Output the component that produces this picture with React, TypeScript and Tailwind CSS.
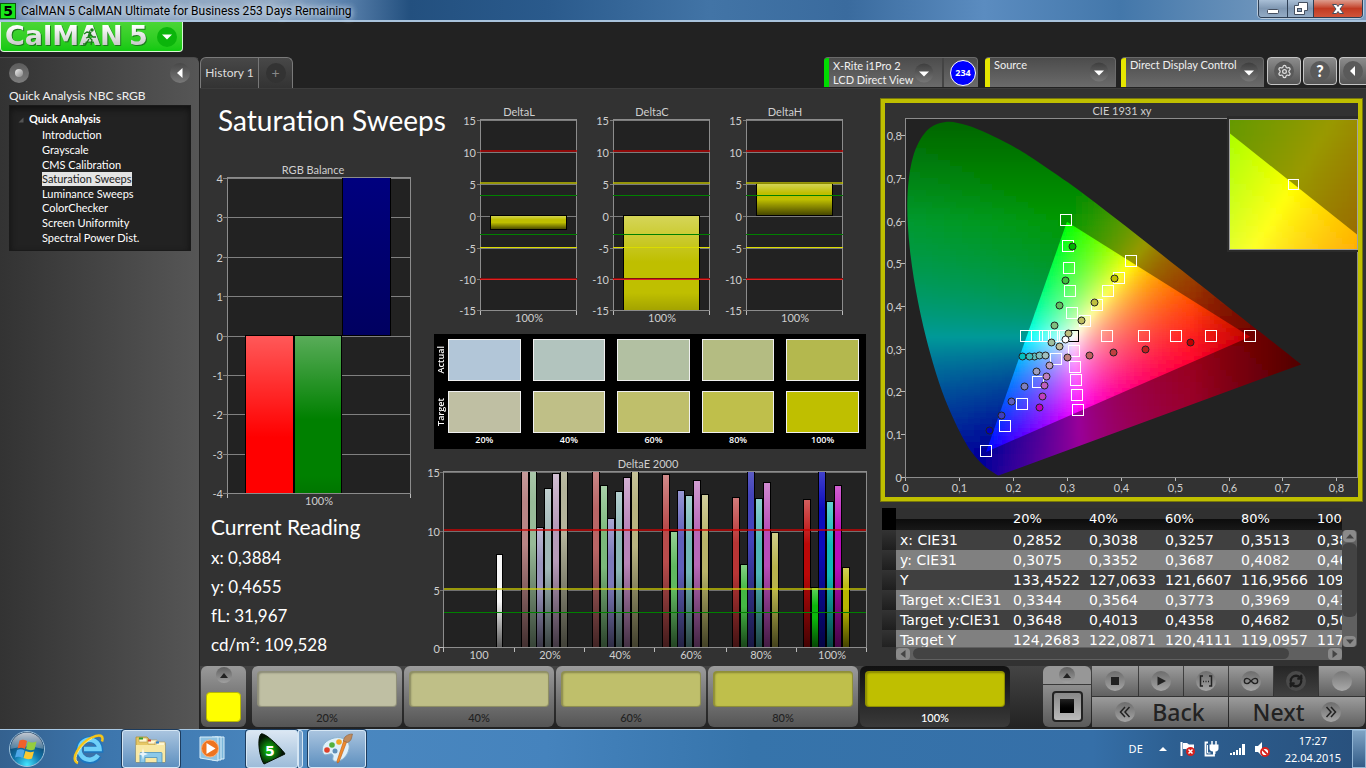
import React, { useState } from 'react';
import { Settings, Infinity as InfinityIcon, RefreshCw } from 'lucide-react';

const PAGES = [
  'Introduction',
  'Grayscale',
  'CMS Calibration',
  'Saturation Sweeps',
  'Luminance Sweeps',
  'ColorChecker',
  'Screen Uniformity',
  'Spectral Power Dist.',
];

const LEVELS = ['20%', '40%', '60%', '80%', '100%'];
const ACTUAL = ['#b2c6d8', '#b2c4be', '#b2c0a2', '#b4bc82', '#b4b84e'];
const TARGET = ['#bfbfa3', '#bfbf87', '#bfbf6b', '#bfbf4b', '#bfbf00'];

const READINGS = [
  ['x: CIE31', '0,2852', '0,3038', '0,3257', '0,3513', '0,3884'],
  ['y: CIE31', '0,3075', '0,3352', '0,3687', '0,4082', '0,4655'],
  ['Y', '133,4522', '127,0633', '121,6607', '116,9566', '109,5280'],
  ['Target x:CIE31', '0,3344', '0,3564', '0,3773', '0,3969', '0,4193'],
  ['Target y:CIE31', '0,3648', '0,4013', '0,4358', '0,4682', '0,5053'],
  ['Target Y', '124,2683', '122,0871', '120,4111', '119,0957', '117,8412'],
];

/* ---------- charts ---------- */

function Label({ x, y, anchor = 'middle', children }: { x: number; y: number; anchor?: 'start' | 'middle' | 'end'; children: React.ReactNode }) {
  return (
    <text x={x} y={y} textAnchor={anchor} className="fill-[#cfcfcf] text-[11px]">
      {children}
    </text>
  );
}

function Shade() {
  return (
    <defs>
      <linearGradient id="shade" x1="0" y1="0" x2="0" y2="1">
        <stop offset="0" stopColor="#fff" stopOpacity="0.35" />
        <stop offset="0.3" stopColor="#fff" stopOpacity="0" />
        <stop offset="0.5" stopColor="#000" stopOpacity="0" />
        <stop offset="1" stopColor="#000" stopOpacity="0.65" />
      </linearGradient>
    </defs>
  );
}

function Bar({ x, y, w, h, color }: { x: number; y: number; w: number; h: number; color: string }) {
  return (
    <g>
      <rect x={x} y={y} width={w} height={h} fill={color} />
      <rect x={x} y={y} width={w} height={h} fill="url(#shade)" stroke="#000" />
    </g>
  );
}

function Frame({ x, y, w, h }: { x: number; y: number; w: number; h: number }) {
  return <rect x={x} y={y} width={w} height={h} fill="none" stroke="#8c8c8c" />;
}

function RgbBalance() {
  const rows = [4, 3, 2, 1, 0, -1, -2, -3, -4];
  return (
    <svg viewBox="200 160 233 350" className="block w-full overflow-visible" role="img" aria-label="RGB Balance">
      <Shade />
      <linearGradient id="blueFade" x1="0" y1="0" x2="0" y2="1">
        <stop offset="0" stopColor="#000080" /><stop offset="1" stopColor="#000060" />
      </linearGradient>
      <clipPath id="rgbClip"><rect x="228" y="178" width="182" height="315" /></clipPath>
      <Label x={313} y={174}>RGB Balance</Label>
      <rect x="227" y="177" width="184" height="317" fill="#222" />
      {rows.map((v, i) => {
        const y = 178.5 + Math.round(i * 39.4);
        return (
          <g key={v}>
            <path d={`M223 ${y}H410`} stroke="#808080" />
            <Label x={223} y={y + 4} anchor="end">{v}</Label>
          </g>
        );
      })}
      <g clipPath="url(#rgbClip)">
        <Bar x={245.5} y={335.5} w={48} h={340} color="#ff0000" />
        <Bar x={294.5} y={335.5} w={47} h={280} color="#008000" />
        <rect x="342.5" y="170.5" width="48" height="165" fill="url(#blueFade)" stroke="#000" />
      </g>
      <Frame x={227.5} y={177.5} w={183} h={316} />
      <path d="M227.5 494v4M410.5 494v4" stroke="#bbb" />
      <Label x={319} y={505}>100%</Label>
    </svg>
  );
}

function DeltaPlot({ x, name, top, bottom }: { x: number; name: string; top: number; bottom: number }) {
  const grid: [number, number][] = [[15, 120.5], [10, 152.5], [5, 184.5], [0, 216.5], [-5, 248.5], [-10, 279.5], [-15, 310.5]];
  return (
    <g>
      <clipPath id={'clip' + name}><rect x={x} y="120" width="96" height="190" /></clipPath>
      <Label x={x + 39} y={116}>{name}</Label>
      <rect x={x} y="119" width="97" height="192" fill="#222" />
      {grid.map(([v, y]) => (
        <g key={v}>
          <path d={`M${x - 3} ${y}h99`} stroke="#7c7c7c" />
          <Label x={x - 4} y={y + 4} anchor="end">{v}</Label>
        </g>
      ))}
      <Frame x={x + 0.5} y={119.5} w={96} h={191} />
      <g clipPath={`url(#clip${name})`}>
        <Bar x={x + 10.5} y={top} w={76} h={bottom - top} color="#bfbf00" />
      </g>
      <rect x={x} y="150" width="97" height="2" fill="#c00000" opacity="0.7" />
      <rect x={x} y="182" width="97" height="2" fill="#c8c800" opacity="0.7" />
      <rect x={x} y="195" width="97" height="1" fill="#008000" />
      <rect x={x} y="234" width="97" height="1" fill="#008000" />
      <rect x={x} y="247" width="97" height="1" fill="#dcdc00" />
      <rect x={x} y="278" width="97" height="1" fill="#801010" />
      <rect x={x} y="279" width="97" height="1" fill="#e02020" />
      <path d={`M${x + 0.5} 311v4M${x + 96.5} 311v4`} stroke="#bbb" />
      <Label x={x + 49} y={322}>100%</Label>
    </g>
  );
}

function DeltaCharts() {
  return (
    <svg viewBox="433 100 447 230" className="block w-full overflow-visible" role="img" aria-label="DeltaL, DeltaC and DeltaH">
      <Shade />
      <DeltaPlot x={480} name="DeltaL" top={215.5} bottom={229.5} />
      <DeltaPlot x={613} name="DeltaC" top={215.5} bottom={370} />
      <DeltaPlot x={746} name="DeltaH" top={183.5} bottom={215.5} />
    </svg>
  );
}

// top edge of each bar: red, green, blue, cyan, magenta, yellow
const DELTA_E = [
  { x: 521, tops: [440, 440, 528, 489, 474, 420], colors: ['#b98585', '#98bb98', '#9a95bd', '#a0b7b7', '#b79bb9', '#b4b49b'] },
  { x: 592, tops: [450, 486, 519, 492, 478, 445], colors: ['#b86565', '#7ab87a', '#7d7aba', '#8cb6b6', '#b985b9', '#b8b480'] },
  { x: 662, tops: [475, 532, 491, 496, 481, 495], colors: ['#b84c4c', '#5fb85f', '#605fba', '#73b6b6', '#b868b8', '#b8b468'] },
  { x: 732, tops: [498, 565, 430, 499, 483, 533], colors: ['#b83535', '#44b844', '#4444ba', '#50b6b6', '#b84cb8', '#b8b44c'] },
  { x: 803, tops: [500, 588, 450, 502, 486, 568], colors: ['#bb0808', '#0cb80c', '#0c0cbc', '#10b8b8', '#b80cb8', '#b8b400'] },
];

function DeltaE() {
  return (
    <svg viewBox="433 455 447 208" className="block w-full overflow-visible" role="img" aria-label="DeltaE 2000">
      <Shade />
      <clipPath id="deClip"><rect x="444" y="472" width="422" height="175" /></clipPath>
      <Label x={648} y={468}>DeltaE 2000</Label>
      <rect x="443" y="471" width="424" height="177" fill="#222" />
      {[[15, 472.5], [10, 531.5], [5, 590.5], [0, 648.5]].map(([v, y]) => (
        <g key={v}>
          {v > 0 && <path d={`M440 ${y}H866`} stroke="#707070" />}
          <Label x={440} y={y + 4} anchor="end">{v}</Label>
        </g>
      ))}
      <g clipPath="url(#deClip)">
        <Bar x={496.5} y={554.5} w={6} h={94} color="#f6f6f6" />
        {DELTA_E.map(g =>
          g.tops.map((top, i) => (
            <Bar key={g.x + i} x={g.x + 0.5 + Math.round(i * 7.7)} y={top - 0.5} w={7} h={649 - top} color={g.colors[i]} />
          ))
        )}
      </g>
      <Frame x={443.5} y={471.5} w={423} h={176} />
      <path d="M444 530h422" stroke="#d00000" strokeWidth="2" opacity="0.7" />
      <path d="M444 589h422" stroke="#d8d800" strokeWidth="2" opacity="0.65" />
      <path d="M444 612.5h422" stroke="#008000" />
      <path d="M439 647.5h5M443.5 648v4M514.5 648v4M584.5 648v4M654.5 648v4M726.5 648v4M796.5 648v4M866.5 648v4" stroke="#bbb" />
      {['100', ...LEVELS].map((t, i) => (
        <Label key={t + i} x={479 + Math.round(i * 70.5)} y={659}>{t}</Label>
      ))}
    </svg>
  );
}

/* ---------- CIE diagram ---------- */

const LOCUS = [
  [0.1741, 0.005], [0.1714, 0.0051], [0.1644, 0.0109], [0.1566, 0.0177], [0.144, 0.0297], [0.1241, 0.0578],
  [0.1096, 0.0868], [0.0913, 0.1327], [0.0687, 0.2007], [0.0454, 0.295], [0.0235, 0.4127], [0.0082, 0.5384],
  [0.0039, 0.6548], [0.0139, 0.7502], [0.0389, 0.812], [0.0743, 0.8338], [0.1142, 0.8262], [0.1547, 0.8059],
  [0.1929, 0.7816], [0.2296, 0.7543], [0.3016, 0.6923], [0.3731, 0.6245], [0.4441, 0.5547], [0.5125, 0.4866],
  [0.5752, 0.4242], [0.627, 0.3725], [0.6658, 0.334], [0.6915, 0.3083], [0.719, 0.2809], [0.7347, 0.2653],
];

const toX = (x: number) => 905.3 + x * 538.8;
const toY = (y: number) => 477.5 - y * 426.3;

function smoothPath(points: number[][]) {
  const p = points.map(([x, y]) => [toX(x), toY(y)]);
  let d = `M${p[0][0]} ${p[0][1]}`;
  for (let i = 0; i < p.length - 1; i++) {
    const a = p[Math.max(i - 1, 0)];
    const b = p[i];
    const c = p[i + 1];
    const e = p[Math.min(i + 2, p.length - 1)];
    d += `C${b[0] + (c[0] - a[0]) / 6} ${b[1] + (c[1] - a[1]) / 6} ${c[0] - (e[0] - b[0]) / 6} ${c[1] - (e[1] - b[1]) / 6} ${c[0]} ${c[1]}`;
  }
  return d + 'Z';
}

// chromaticity -> display colour at full drive, scaled by level
function xyColor(x: number, y: number, level: number) {
  const z = 1 - x - y;
  const rgb = [
    3.2406 * x - 1.5372 * y - 0.4986 * z,
    -0.9689 * x + 1.8758 * y + 0.0415 * z,
    0.0557 * x - 0.204 * y + 1.057 * z,
  ];
  const max = Math.max(...rgb);
  const fade = (1 - 2.3 * Math.max(0, x - 0.53)) * (1 - 1.4 * Math.max(0, y - 0.6));
  const out = rgb.map(c => Math.round(255 * level * fade * Math.pow(Math.max(0, c) / max, 1 / 1.15)));
  return `rgb(${out.join(',')})`;
}

type MeshProps = {
  x: number; y: number; w: number; h: number; step: number; level: number;
  invert: (px: number, py: number) => [number, number];
};

function Mesh({ x, y, w, h, step, level, invert }: MeshProps) {
  const cells = [];
  for (let py = y; py < y + h; py += step) {
    for (let px = x; px < x + w; px += step) {
      const [cx, cy] = invert(px + step / 2, py + step / 2);
      cells.push(<rect key={px + '-' + py} x={px} y={py} width={step} height={step} fill={xyColor(cx, cy, level)} />);
    }
  }
  return <g shapeRendering="crispEdges" filter="url(#soft)">{cells}</g>;
}

const mainInvert = (px: number, py: number): [number, number] => [(px - 905.3) / 538.8, (477.5 - py) / 426.3];
const insetInvert = (px: number, py: number): [number, number] => [0.4193 + (px - 1293.5) / 2000, 0.5053 - (py - 184.5) / 2000];

const TARGETS = [
  [1066, 220], [1068, 246], [1069, 268], [1070, 291], [1072, 313],
  [1131, 261], [1119, 278], [1108, 291], [1097, 305], [1085, 321],
  [1026, 336], [1037, 336], [1045, 336], [1054, 336], [1063, 336],
  [1107, 336], [1144, 336], [1176, 336], [1211, 336], [1250, 336],
  [1074, 351], [1075, 367], [1076, 380], [1077, 395], [1078, 410],
  [1056, 359], [1038, 382], [1022, 404], [1005, 426], [986, 451],
];

const MEASURED: [number, number, string][] = [
  [1072, 246, '#00b400'], [1065, 280, '#3fbf3f'], [1059, 305, '#60bf60'], [1054, 325, '#7fbf7f'], [1051, 342, '#9fbf9f'],
  [1114, 278, '#bfbf00'], [1094, 302, '#bfbf3f'], [1081, 320, '#bfbf60'], [1068, 333, '#bfbf7f'], [1059, 346, '#bfbf9f'],
  [1022, 356, '#00bfbf'], [1034, 356, '#60bfbf'], [1029, 356, '#3fbfbf'], [1039, 355, '#7fbfbf'], [1045, 355, '#9fbfbf'],
  [1067, 357, '#bf8080'], [1089, 355, '#bf6060'], [1113, 352, '#bf4040'], [1145, 349, '#bf2020'], [1190, 342, '#bf0000'],
  [1049, 365, '#bf9fbf'], [1046, 376, '#bf7fbf'], [1044, 385, '#bf60bf'], [1042, 396, '#bf3fbf'], [1039, 407, '#bf00bf'],
  [1036, 371, '#9f9fbf'], [1024, 386, '#7f7fbf'], [1011, 401, '#6060bf'], [1001, 415, '#3f3fbf'], [989, 430, '#0000bf'],
  [1065, 339, '#ffffff'],
];

function CieChart() {
  return (
    <svg viewBox="885 103 473 394" className="block w-full overflow-visible" role="img" aria-label="CIE 1931 xy">
      <defs>
        <filter id="soft" x="0" y="0" width="1" height="1"><feGaussianBlur stdDeviation="2" /></filter>
        <clipPath id="locus"><path d={smoothPath(LOCUS)} /></clipPath>
        <clipPath id="gamut"><path d={`M${toX(0.64)} ${toY(0.33)}L${toX(0.3)} ${toY(0.6)}L${toX(0.15)} ${toY(0.06)}Z`} /></clipPath>
        <clipPath id="insetBox"><rect x="1230" y="120" width="127" height="129" /></clipPath>
        <clipPath id="insetGamut"><path d="M1230 133.500L1357 234.500V249H1230Z" /></clipPath>
      </defs>
      <Label x={1122} y={115}>CIE 1931 xy</Label>
      <rect x="905" y="118" width="453" height="360" fill="#222" stroke="none" />
      <g clipPath="url(#locus)"><Mesh x={896} y={112} w={414} h={372} step={6} level={0.6} invert={mainInvert} /></g>
      <g clipPath="url(#gamut)"><Mesh x={978} y={212} w={280} h={248} step={4} level={1} invert={mainInvert} /></g>
      <rect x="905.5" y="118.5" width="452" height="359" fill="none" stroke="#8c8c8c" />
      {[0, 1, 2, 3, 4, 5, 6, 7, 8].map(n => {
        const text = n === 0 ? '0' : `0,${n}`;
        const px = Math.round(905.3 + n * 53.88) + 0.5;
        const py = Math.round(477.5 - n * 42.63) - 0.5;
        return (
          <g key={n}>
            <path d={`M${px} 478v3M901 ${py}h4`} stroke="#bbb" />
            <Label x={px} y={492}>{text}</Label>
            <Label x={902} y={py + 4} anchor="end">{text}</Label>
          </g>
        );
      })}
      {TARGETS.map(([x, y]) => (
        <rect key={x + '/' + y} x={x - 5.5} y={y - 5.5} width="11" height="11" fill="none" stroke="#fff" />
      ))}
      <rect x="1068.5" y="330.5" width="10" height="11" fill="none" stroke="#000" />
      {MEASURED.map(([x, y, c]) => (
        <circle key={x + '/' + y} cx={x + 0.5} cy={y + 0.5} r="3.5" fill={c} stroke="#222" />
      ))}
      <rect x="1227" y="116" width="131" height="136" fill="#2b2b2b" />
      <g clipPath="url(#insetBox)"><Mesh x={1222} y={112} w={144} h={144} step={6} level={0.6} invert={insetInvert} /></g>
      <g clipPath="url(#insetGamut)"><Mesh x={1222} y={112} w={144} h={144} step={6} level={1} invert={insetInvert} /></g>
      <rect x="1229.5" y="119.5" width="128" height="130" fill="none" stroke="#a0a0a0" />
      <rect x="1288.5" y="179.500" width="10" height="10" fill="none" stroke="#fff" />
    </svg>
  );
}

/* ---------- small pieces ---------- */

function Down({ className = '' }: { className?: string }) {
  return (
    <svg viewBox="0 0 20 20" className={'size-5 shrink-0 ' + className} aria-hidden="true">
      <defs>
        <linearGradient id="disc" x1="0" y1="0" x2="0" y2="1">
          <stop offset="0" stopColor="#3e3e3e" /><stop offset="1" stopColor="#767676" />
        </linearGradient>
      </defs>
      <circle cx="10" cy="10" r="9.500" fill="url(#disc)" />
      <path d="M5 8.500h10L10 13.500Z" fill="#fff" />
    </svg>
  );
}

function TitleBar() {
  return (
    <header className="flex h-[22px] items-start justify-between border-b-2 border-[#a9c3dd] bg-[linear-gradient(90deg,#5d7fa8_0%,#8aa3c0_3%,#93aac4_20%,#5c83ae_25%,#23507f_30%,#2a5a8c_40%,#4274a6_52%,#3a6b9e_62%,#5b8cc0_72%,#4377aa_82%,#6b93bb_92%,#7b9dc0_100%)]">
      <div className="flex h-[21px] items-center gap-[5px] font-[Roboto] text-[12px] text-black">
        <span className="flex size-4 items-center justify-center border border-[#0a5a0a] bg-[#19e619] font-['DejaVu_Sans'] text-sm font-bold">5</span>
        <h1 className="whitespace-nowrap [text-shadow:0_0_6px_#dfe8f2,0_0_6px_#dfe8f2]">CalMAN 5 CalMAN Ultimate for Business 253 Days Remaining</h1>
      </div>
      <div className="mr-[3px] flex h-[18px] overflow-hidden rounded-b border border-t-0 border-[#2d3f55] shadow-[0_0_0_1px_#b9cadb]">
        <button aria-label="Minimize" className="flex w-[29px] items-center justify-center border-r border-[#2d3f55] bg-linear-to-b from-[#a9bfd6] via-[#7f97b2] to-[#93abc5]">
          <svg viewBox="0 0 14 12" className="h-3 w-3.5"><rect x="1.500" y="6.500" width="11" height="4" rx="1" fill="#fff" stroke="#444f60" /></svg>
        </button>
        <button aria-label="Restore" className="flex w-[26px] items-center justify-center border-r border-[#2d3f55] bg-linear-to-b from-[#a9bfd6] via-[#7f97b2] to-[#93abc5]">
          <svg viewBox="0 0 14 13" className="h-[13px] w-3.5">
            <path d="M4.500 .5h9v8h-3v4h-10v-9h4Z" fill="#fff" stroke="#444f60" />
            <rect x="3.500" y="6.500" width="4" height="3" fill="#8fa5bd" stroke="#444f60" />
          </svg>
        </button>
        <button aria-label="Close" className="flex w-12 items-center justify-center bg-linear-to-b from-[#dd9c8d] via-[#c13a22] to-[#d0543a]">
          <svg viewBox="0 0 14 12" className="h-3 w-3.5"><path d="M1.500 1.500h4l1.500 2 1.500-2h4l-3.500 4.500 3.500 4.500h-4L7 8.500l-1.500 2h-4L5 6Z" fill="#fff" stroke="#444f60" /></svg>
        </button>
      </div>
    </header>
  );
}

function Sidebar() {
  const [page, setPage] = useState('Saturation Sweeps');
  return (
    <aside className="flex w-[200px] shrink-0 flex-col rounded-tr-md border-t border-r border-t-[#4c4c4c] border-r-[#222] bg-linear-to-r from-[#333] to-[#565656] px-[9px]">
      <div className="flex h-[30px] items-center justify-between">
        <button aria-label="Options" className="size-5 rounded-full bg-linear-to-b from-[#5c5c5c] to-[#7d7d7d] p-1.5">
          <span className="block size-2 rounded-full bg-linear-to-br from-[#eee] to-[#888]" />
        </button>
        <button aria-label="Collapse sidebar" className="flex size-5 items-center justify-center rounded-full bg-linear-to-b from-[#484848] to-[#787878]">
          <svg viewBox="0 0 10 12" className="h-3 w-2.5"><path d="M7.500 1v10L2 6Z" fill="#fff" /></svg>
        </button>
      </div>
      <h2 className="h-[17px] text-[12px] leading-4 whitespace-nowrap text-[#f0f0f0]">Quick Analysis NBC sRGB</h2>
      <nav className="-mr-px h-[146px] border border-[#1a1a1a] bg-[#222] pt-[5px] pl-2 shadow-[inset_0_3px_6px_#111]">
        <div className="flex h-[17px] items-center gap-[5px] text-[11px] font-bold text-white">
          <svg viewBox="0 0 6 6" className="size-1.5"><path d="M5.500 .5v5h-5Z" fill="#555" /></svg>
          Quick Analysis
        </div>
        <ul className="grid h-[117px] grid-rows-8 pl-6 text-[11px] text-white">
          {PAGES.map(p => (
            <li key={p} className="flex items-center">
              <a
                href="#"
                onClick={() => setPage(p)}
                className={p === page ? 'bg-[#e4e4e4] leading-[14px] text-[#222]' : 'leading-[14px]'}
              >
                {p}
              </a>
            </li>
          ))}
        </ul>
      </nav>
    </aside>
  );
}

function Toolbar() {
  return (
    <div className="flex h-[31px] items-start justify-between bg-[#222]">
      <div className="flex h-full overflow-hidden rounded-t-md border border-b-0 border-[#7a7a7a] bg-linear-to-b from-[#484848] to-[#333] text-xs text-[#ddd]">
        <button className="w-[58px] border-r border-[#777] text-center whitespace-nowrap">History 1</button>
        <button aria-label="Add history" className="flex w-[33px] items-center justify-center">
          <span className="flex size-5 items-center justify-center rounded-full bg-[#333] text-sm leading-none text-[#888]">+</span>
        </button>
      </div>
      <div className="flex h-full text-[11px] leading-[14px] text-[#f0f0f0]">
        <div className="mr-[7px] flex h-[30px] w-[154px] overflow-hidden rounded-t border border-b-0 border-l-0 border-[#6a6a6a] bg-linear-to-b from-[#4c4c4c] to-[#6b6b6b]">
          <span className="w-[5px] bg-[#00dc00]" />
          <button aria-haspopup="menu" className="flex flex-1 items-center justify-between border-r-2 border-[#444] pr-2 pl-1 text-left whitespace-nowrap">
            <span>X-Rite i1Pro 2<br />LCD Direct View</span>
            <Down />
          </button>
          <div className="flex w-[33px] items-center justify-end pr-px">
            <span className="flex size-[26px] items-center justify-center rounded-full border border-white bg-[#0000ff] font-['Open_Sans'] text-[9px] font-bold text-white">234</span>
          </div>
        </div>
        <button aria-haspopup="menu" className="mr-[5px] flex h-[30px] w-[131px] overflow-hidden rounded-t border border-b-0 border-l-0 border-[#6a6a6a] bg-linear-to-b from-[#4c4c4c] to-[#6b6b6b] pr-1.5 text-left">
          <span className="mr-1 h-full w-[5px] bg-[#e6e600]" />
          <span className="flex-1">Source</span>
          <Down className="mt-1" />
        </button>
        <button aria-haspopup="menu" className="mr-[3px] flex h-[30px] w-[143px] overflow-hidden rounded-t border border-b-0 border-l-0 border-[#6a6a6a] bg-linear-to-b from-[#4c4c4c] to-[#6b6b6b] pr-1 text-left whitespace-nowrap">
          <span className="mr-1 h-full w-[5px] bg-[#e6e600]" />
          <span className="flex-1">Direct Display Control</span>
          <Down className="mt-1" />
        </button>
        <button aria-label="Settings" className="mr-0.5 flex h-7 w-[34px] items-center justify-center rounded border border-[#c4c4c4] bg-linear-to-b from-[#8c8c8c] to-[#555]">
          <span className="flex size-5 items-center justify-center rounded-full bg-[#5a5a5a]"><Settings size={15} color="#ddd" /></span>
        </button>
        <button aria-label="Help" className="mr-0.5 flex h-7 w-[34px] items-center justify-center rounded border border-[#c4c4c4] bg-linear-to-b from-[#8c8c8c] to-[#555]">
          <span className="flex size-5 items-center justify-center rounded-full bg-[#5a5a5a] text-base font-black text-white">?</span>
        </button>
        <button aria-label="Collapse toolbar" className="flex h-7 w-[27px] items-center justify-center rounded-l border border-r-0 border-[#c4c4c4] bg-linear-to-b from-[#8c8c8c] to-[#555]">
          <span className="flex size-5 items-center justify-center rounded-full bg-[#5a5a5a]">
            <svg viewBox="0 0 10 12" className="h-3 w-2.5"><path d="M7 1v10L2 6Z" fill="#fff" /></svg>
          </span>
        </button>
      </div>
    </div>
  );
}

function Swatches() {
  const rows = [{ name: 'Actual', colors: ACTUAL }, { name: 'Target', colors: TARGET }];
  return (
    <section className="mt-1 mr-3.5 ml-px flex h-[115px] flex-col bg-black pt-[5px] font-['Open_Sans'] text-[9px] font-semibold text-white">
      {rows.map(r => (
        <div key={r.name} className="mb-2.5 flex h-[42px] pr-[7px]">
          <div className="flex w-3.5 shrink-0 items-center justify-center">
            <span className="rotate-180 leading-3 [writing-mode:vertical-rl]">{r.name}</span>
          </div>
          <div className="grid flex-1 grid-cols-5 gap-x-3">
            {r.colors.map(c => (
              <div key={c} className="border border-[#f0f0f0]" style={{ background: c }} />
            ))}
          </div>
        </div>
      ))}
      <div className="-mt-2.5 grid grid-cols-5 gap-x-3 pr-[7px] pl-3.5 text-center leading-[14px]">
        {LEVELS.map(l => <span key={l}>{l}</span>)}
      </div>
    </section>
  );
}

function ReadingsTable() {
  return (
    <section className="mt-1.5 mr-[9px] ml-0.5 grid grid-cols-[minmax(0,1fr)_15px] grid-rows-[139px_13px] font-['DejaVu_Sans'] text-sm text-white">
      <div className="overflow-hidden">
        <table className="w-[507px] table-fixed border-collapse text-left leading-5">
          <thead>
            <tr className="h-[22px] bg-[linear-gradient(#303030_50%,#0c0c0c_50%,#181818)]">
              <th className="w-3.5 bg-black p-0" />
              <th className="w-[113px] p-0" />
              {LEVELS.map(l => <th key={l} className="w-19 p-0 pl-1 text-[13px] font-normal">{l}</th>)}
            </tr>
          </thead>
          <tbody>
            {READINGS.map(([name, ...values]) => (
              <tr key={name} className="h-5 bg-[#404040] even:bg-[#808080]">
                <td className="bg-linear-to-b from-[#333] to-[#1e1e1e] p-0" />
                <th className="p-0 pl-1 font-normal whitespace-nowrap">{name}</th>
                {values.map((v, i) => <td key={i} className="p-0 pl-1">{v}</td>)}
              </tr>
            ))}
          </tbody>
        </table>
      </div>
      <div className="mt-[22px] flex flex-col items-center justify-between rounded bg-[#606060]">
        <button aria-label="Scroll up" className="flex h-3 w-[13px] items-center justify-center rounded bg-[#8a8a8a]">
          <svg viewBox="0 0 8 6" className="h-1.5 w-2"><path d="M0 5.500h8L4 1Z" fill="#444" /></svg>
        </button>
        <span className="mb-[19px] h-[74px] w-[15px] rounded-md bg-[#434343]" />
        <button aria-label="Scroll down" className="flex h-[11px] w-[13px] items-center justify-center rounded bg-[#8a8a8a]">
          <svg viewBox="0 0 8 6" className="h-1.5 w-2"><path d="M0 .5h8L4 5Z" fill="#444" /></svg>
        </button>
      </div>
      <div className="ml-3.5 flex items-center bg-[#606060]">
        <button aria-label="Scroll left" className="flex h-3 w-3.5 items-center justify-center rounded bg-[#8a8a8a]">
          <svg viewBox="0 0 6 8" className="h-2 w-1.5"><path d="M5.500 0v8L.5 4Z" fill="#444" /></svg>
        </button>
        <span className="mr-[39px] ml-[3px] h-[11px] flex-1 rounded-md bg-[#434343]" />
        <button aria-label="Scroll right" className="flex h-3 w-3.5 items-center justify-center rounded bg-[#8a8a8a]">
          <svg viewBox="0 0 6 8" className="h-2 w-1.5"><path d="M.5 0v8l5-4Z" fill="#444" /></svg>
        </button>
      </div>
    </section>
  );
}

function Disc({ children, className = 'bg-linear-to-b from-[#6d6d6d] to-[#a5a5a5]' }: { children?: React.ReactNode; className?: string }) {
  return <span className={'flex size-5 shrink-0 items-center justify-center rounded-full ' + className}>{children}</span>;
}

function UpDisc() {
  return (
    <span className="flex size-4 items-center justify-center rounded-full bg-linear-to-b from-[#606060] to-[#a0a0a0]">
      <svg viewBox="0 0 8 5" className="h-[5px] w-2"><path d="M0 5h8L4 0Z" fill="#222" /></svg>
    </span>
  );
}

function BottomBar() {
  const [level, setLevel] = useState('100%');
  const key = 'flex items-center justify-center bg-linear-to-b from-[#9c9c9c] to-[#616161]';
  return (
    <footer className="flex h-[63px] items-start gap-1.5 bg-linear-to-b from-[#444] to-[#222] pl-px">
      <button aria-label="Current patch" className="flex h-[61px] w-[45px] flex-col items-center rounded-md bg-linear-to-b from-[#9a9a9a] to-[#555] pt-px">
        <UpDisc />
        <span className="mt-[9px] h-[30px] w-[35px] rounded border border-[#b8b800] bg-[#ffff00]" />
      </button>
      <div className="grid min-w-0 flex-1 grid-cols-5 gap-0.5">
        {LEVELS.map((l, i) => (
          <button
            key={l}
            onClick={() => setLevel(l)}
            className={
              'flex h-[61px] flex-col items-stretch rounded-md px-[5px] pt-[5px] text-[11px] font-medium ' +
              (l === level ? 'bg-linear-to-b from-[#111] to-[#3a3a3a] font-bold text-white' : 'bg-linear-to-b from-[#9c9c9c] to-[#555] text-[#222]')
            }
          >
            <span className="h-9 rounded border border-black/25 shadow-[inset_1px_1px_2px_rgba(0,0,0,0.3)]" style={{ background: TARGET[i] }} />
            <span className="mt-1 leading-[14px]">{l}</span>
          </button>
        ))}
      </div>
      <div className="ml-[27px] flex gap-px pr-px">
        <div className="flex h-[61px] w-12 flex-col gap-px overflow-hidden rounded-md">
          <button aria-label="Expand" className="flex h-[18px] items-center justify-center bg-[#979797]"><UpDisc /></button>
          <button aria-label="Pattern window" className="flex flex-1 items-center justify-center bg-linear-to-b from-[#8e8e8e] to-[#5a5a5a]">
            <span className="flex size-[31px] items-center justify-center rounded border-2 border-[#222] bg-linear-to-b from-[#888] to-[#bbb]">
              <span className="size-3.5 bg-linear-to-b from-[#222] to-black" />
            </span>
          </button>
        </div>
        <div className="grid grid-cols-[46px_44px_44px_44px_44px_46px] grid-rows-[30px_30px] gap-px overflow-hidden rounded-r-md">
          <button aria-label="Stop" className={key}><Disc><span className="size-2 bg-[#222]" /></Disc></button>
          <button aria-label="Play" className={key}>
            <Disc><svg viewBox="0 0 10 10" className="size-2.5"><path d="M1.500 .5v9L10 5Z" fill="#222" /></svg></Disc>
          </button>
          <button aria-label="Read series" className={key}>
            <Disc>
              <svg viewBox="0 0 14 12" className="h-3 w-3.5" fill="none" stroke="#222" strokeWidth="1.500">
                <path d="M4 1H1.500v10H4M10 1h2.500v10H10" /><path d="M4 6.500h1M6.500 6.500h1M9 6.500h1" />
              </svg>
            </Disc>
          </button>
          <button aria-label="Continuous" className={key}><Disc><InfinityIcon size={16} color="#222" /></Disc></button>
          <button aria-label="Refresh" className="flex items-center justify-center bg-linear-to-b from-[#262626] to-[#404040]">
            <Disc className="bg-[#4a4a4a]"><RefreshCw size={14} strokeWidth={4} color="#1c1c1c" /></Disc>
          </button>
          <button aria-label="Record" className={key}><Disc className="bg-linear-to-b from-[#777] to-[#aaa]" /></button>
          <button className={key + " col-span-3 gap-[17px] font-['Noto_Sans'] text-[23px] leading-none font-medium text-[#222]"}>
            <Disc>
              <svg viewBox="0 0 12 12" className="size-3" fill="none" stroke="#222" strokeWidth="1.500"><path d="M6 1 1.500 6 6 11M10.500 1 6 6l4.500 5" /></svg>
            </Disc>
            Back
          </button>
          <button className={key + " col-span-3 gap-[17px] font-['Noto_Sans'] text-[23px] leading-none font-medium text-[#222]"}>
            Next
            <Disc>
              <svg viewBox="0 0 12 12" className="size-3" fill="none" stroke="#222" strokeWidth="1.500"><path d="m1.500 1 4.500 5-4.500 5M6 1l4.500 5L6 11" /></svg>
            </Disc>
          </button>
        </div>
      </div>
    </footer>
  );
}

/* ---------- taskbar ---------- */

function StartOrb() {
  return (
    <svg viewBox="0 0 38 38" className="size-[38px]">
      <defs>
        <radialGradient id="orb" cx="0.5" cy="0.95" r="0.85">
          <stop offset="0" stopColor="#45e6ff" /><stop offset="0.45" stopColor="#1278ad" /><stop offset="1" stopColor="#0d2f55" />
        </radialGradient>
        <linearGradient id="gloss" x1="0" y1="0" x2="0" y2="1">
          <stop offset="0" stopColor="#fff" stopOpacity="0.75" /><stop offset="1" stopColor="#fff" stopOpacity="0.25" />
        </linearGradient>
      </defs>
      <circle cx="19" cy="19" r="17.500" fill="url(#orb)" stroke="#9fc3dc" />
      <path d="M2.500 19A16.500 16.500 0 0 1 35.500 19Q19 14 2.500 19Z" fill="url(#gloss)" />
      <path d="M11.500 10.500q4-1.500 7.500.5l-2 8q-3.500-2-7.500-.5Z" fill="#f0602a" />
      <path d="M20 11.500q4 2 8.500 0l-2 8q-4.500 1.500-8.500-.5Z" fill="#94cc3e" />
      <path d="M9 20q4-1.500 7.500.500l-2 7.500q-3.500-2-7.500-.5Z" fill="#4fa8e8" />
      <path d="M17.500 21q4 2 8.500.5l-2 7q-4.500 1.500-8.500-.5Z" fill="#fbc932" />
    </svg>
  );
}

function IeIcon() {
  return (
    <svg viewBox="0 0 34 32" className="h-8 w-[34px]" fill="none">
      <path d="M26.500 22.500a10.500 10.500 0 1 1 1.500-6H12" stroke="#1b76c0" strokeWidth="6.500" />
      <path d="M26 22a10 10 0 1 1 1.500-6H12" stroke="#6fd0f8" strokeWidth="4.500" />
      <path d="M6 30C-3 27 8 10 20 4.500c8-4 12-2 10 4" stroke="#f5c518" strokeWidth="2.500" />
      <path d="M6 29C0 26 9 11 20 5.500" stroke="#fff0a0" strokeWidth="0.8" />
    </svg>
  );
}

function FolderIcon() {
  return (
    <svg viewBox="0 0 34 32" className="h-8 w-[34px]">
      <path d="M2 29V4h11l2 2v4h16v19Z" fill="#e6c866" stroke="#b08f35" strokeWidth="0.8" />
      <path d="M5 5h8v4H5ZM14 7h9v4h-9ZM21 9h10v4H21Z" fill="#fff6d0" stroke="#b99c4a" strokeWidth="0.6" />
      <path d="M5 4.500h4v2H5Z" fill="#30a030" /><path d="M14 6.500h3v2h-3Z" fill="#d04030" /><path d="M22 8.500h3v2h-3Z" fill="#3080d0" />
      <path d="M2 12h29v17H2Z" fill="#f8e8a4" />
      <path d="M6 29.500v-9q0-1 1-1h20q1 0 1 1v9h-5v-5H11v5Z" fill="#8cc9e8" stroke="#4d93bd" strokeWidth="0.8" />
      <path d="m9 15 1 4.500 4 1.500-4 1.500L9 27l-1-4.500L4 21l4-1.500Z" fill="#fff" opacity="0.8" />
    </svg>
  );
}

function PlayerIcon() {
  return (
    <svg viewBox="0 0 30 28" className="h-7 w-[30px]">
      <path d="M16 2h9v22h-9Z" fill="#7cb7da" stroke="#d8eefa" />
      <path d="M13 2h9v23h-9Z" fill="#7cb7da" stroke="#d8eefa" />
      <path d="M1 2h18v24L1 23Z" fill="#8fc3e2" stroke="#d8eefa" />
      <circle cx="11" cy="13.500" r="8.500" fill="#ee7420" stroke="#fbb27a" />
      <path d="M7.500 8v11l9-5.500Z" fill="#fff" />
    </svg>
  );
}

function CalmanIcon() {
  return (
    <svg viewBox="0 0 30 32" className="h-8 w-[30px]">
      <defs><radialGradient id="cal" cx="0.4" cy="0.55" r="0.5"><stop offset="0" stopColor="#10e010" /><stop offset="0.5" stopColor="#0a700a" /><stop offset="1" stopColor="#041404" /></radialGradient></defs>
      <path d="M4 1C8-1 26 17 28 21L7 31C2 24 0 5 4 1Z" fill="url(#cal)" stroke="#031003" />
      <text x="8" y="23" className="fill-white font-['DejaVu_Sans'] text-[14px] font-bold">5</text>
    </svg>
  );
}

function PaintIcon() {
  return (
    <svg viewBox="0 0 34 32" className="h-8 w-[34px]">
      <path d="M14 5c9-2 17 3 15 11-2 9-10 14-15 12-3-2 1-5-2-7-3-1-7 3-9-1C0 13 6 7 14 5Z" fill="#dff0fa" stroke="#8cb4cf" />
      <circle cx="15" cy="18" r="2.500" fill="#5f8fb8" />
      <circle cx="7" cy="17" r="2.800" fill="#e0402a" /><circle cx="12" cy="12" r="2.800" fill="#54b03c" /><circle cx="19" cy="9" r="2.800" fill="#f5a623" />
      <path d="M27 8 19 29l-1.500 1L17 28l7-21Z" fill="#f08a2c" stroke="#b86018" strokeWidth="0.600" />
      <path d="M23.500 8c0-4 4-7 9-7-1 4-1 7-5 8.500Z" fill="#c08a5c" stroke="#8d5f38" strokeWidth="0.600" />
    </svg>
  );
}

function Taskbar() {
  const open = 'flex h-[38px] items-center justify-center rounded-[3px] border border-[#d5e6f4] shadow-[0_0_0_1px_#1d3c5e] ';
  return (
    <div className="flex h-[39px] items-center justify-between border-t border-[#a8c8e4] bg-[linear-gradient(90deg,#34618f_0%,#3d76ad_8%,#4b88c0_22%,#4583bd_40%,#3674ab_55%,#356fa8_80%,#2d5f91_86%,#28507c_100%)]">
      <div className="flex items-center">
        <button aria-label="Start" className="ml-2 w-[38px]"><StartOrb /></button>
        <button aria-label="Internet Explorer" className="ml-[26px] w-[34px]"><IeIcon /></button>
        <button aria-label="Explorer" className={open + 'ml-4 w-[58px] bg-linear-to-b from-[#a9c4df] to-[#5e90bf]'}><FolderIcon /></button>
        <button aria-label="Media Player" className="ml-[19px] w-[30px]"><PlayerIcon /></button>
        <button aria-label="CalMAN" className={open + 'ml-[17px] w-[52px] bg-linear-to-b from-[#dbe7f3] to-[#9dbcd9]'}><CalmanIcon /></button>
        <span className="h-[38px] w-[5px] rounded-r-[3px] border border-[#d5e6f4] bg-[#7fa6cc]" />
        <button aria-label="Paint" className={open + 'ml-[5px] w-[58px] bg-linear-to-b from-[#a9c4df] to-[#5e90bf]'}><PaintIcon /></button>
      </div>
      <div className="flex h-full items-center text-white">
        <span className="mr-4 font-['Noto_Sans'] text-[11px]">DE</span>
        <button aria-label="Show hidden icons" className="mr-[13px]">
          <svg viewBox="0 0 8 4" className="h-1 w-2"><path d="M0 4h8L4 0Z" fill="#fff" /></svg>
        </button>
        <svg viewBox="0 0 16 16" className="mr-2 size-4">
          <path d="M1.500 1v14" stroke="#fff" strokeWidth="2" /><path d="M3 2h4l2 1.500h5v6H8L6 8H3Z" fill="#fff" />
          <circle cx="10.500" cy="10.500" r="4.500" fill="#d8201c" /><path d="m8.500 8.500 4 4m0-4-4 4" stroke="#fff" strokeWidth="1.500" />
        </svg>
        <svg viewBox="0 0 16 16" className="mr-2.5 size-4">
          <path d="M4 1.500H1.500v13H10V12" fill="none" stroke="#fff" strokeWidth="1.800" />
          <path d="M3.500 4v8h3" fill="none" stroke="#fff" />
          <path d="M8 0v4M12 0v4" stroke="#fff" strokeWidth="1.500" /><path d="M5.500 3.500h9v4q0 2.500-3 3v2.500H9v-2.500q-3.500-.5-3.500-3Z" fill="#fff" />
        </svg>
        <svg viewBox="0 0 16 12" className="mr-2 h-3 w-4" fill="#fff">
          <path d="M0 10h2v2H0ZM3 9h2v3H3ZM6 7h2v5H6ZM9 5h2v7H9ZM12 1h3v11h-3Z" />
        </svg>
        <svg viewBox="0 0 16 16" className="mr-[15px] size-4">
          <path d="M1 5h3l4-4v14l-4-4H1Z" fill="#fff" />
          <circle cx="11" cy="11" r="4" fill="#fff" stroke="#d8201c" strokeWidth="1.800" /><path d="m8.500 8.500 5 5" stroke="#d8201c" strokeWidth="1.800" />
        </svg>
        <div className="mr-[11px] text-center font-['Noto_Sans'] text-[11px] leading-[17px]">
          <div>17:27</div>
          <div>22.04.2015</div>
        </div>
        <button aria-label="Show desktop" className="h-full w-3.5 border border-[#8fb4d4] bg-linear-to-b from-[#7fa3c4] to-[#335d88]" />
      </div>
    </div>
  );
}

export default function App() {
  return (
    <div className="flex min-h-screen flex-col bg-[#222] font-[Lato,sans-serif]">
      <TitleBar />
      <div className="flex h-[35px] items-start">
        <button className="flex h-[30px] w-[183px] items-center rounded-b border border-t-0 border-white/80 bg-linear-to-b from-[#4ad636] to-[#0fc90f] pl-1">
          <svg viewBox="0 0 150 28" className="h-7 w-[150px] overflow-visible" role="img" aria-label="CalMAN 5">
            <defs>
              <linearGradient id="silver" x1="0" y1="0" x2="0" y2="1"><stop offset="0.2" stopColor="#fff" /><stop offset="1" stopColor="#b8b8b8" /></linearGradient>
            </defs>
            <g className="font-['DejaVu_Sans'] text-[27px] font-bold [filter:drop-shadow(1px_1px_0_#1b7a1b)]">
              <text x="0" y="22" fill="url(#silver)">CalMAN</text>
              <text x="124" y="22" fill="url(#silver)">5</text>
            </g>
            <circle cx="87" cy="7" r="1.800" fill="#1b7a1b" />
            <path d="m86 9-2 5-3 1m3-1 3 3-1 5m-2-6-3 5h-3m7-10 3 3h3m-5-4-4-1-3 2" fill="none" stroke="#1b7a1b" strokeWidth="1.300" />
          </svg>
          <span className="ml-0.5 flex size-5 items-center justify-center rounded-full bg-[#0bb50b]">
            <svg viewBox="0 0 10 6" className="h-1.5 w-2.5"><path d="M0 .5h10L5 5.500Z" fill="#fff" /></svg>
          </span>
        </button>
      </div>
      <div className="flex flex-1">
        <Sidebar />
        <div className="flex min-w-0 flex-1 flex-col">
          <Toolbar />
          <main className="grid flex-1 grid-cols-[minmax(0,233fr)_minmax(0,447fr)_minmax(0,486fr)] items-start border-t border-[#3c3c3c] bg-[#323232]">
            <div>
              <h2 className="h-[71px] pt-[13px] pl-[18px] text-[28px] leading-9 whitespace-nowrap text-white">Saturation Sweeps</h2>
              <RgbBalance />
              <div className="pl-[11px] text-[17px] leading-[29px] text-white">
                <h3 className="text-[21px] leading-[33px]">Current Reading</h3>
                <p>x: 0,3884</p>
                <p>y: 0,4655</p>
                <p>fL: 31,967</p>
                <p>cd/m²: 109,528</p>
              </div>
            </div>
            <div className="pt-[11px]">
              <DeltaCharts />
              <Swatches />
              <div className="mt-1.5"><DeltaE /></div>
            </div>
            <div className="pt-[9px]">
              <div className="mr-[3px] border-5 border-[#bfbf00] outline -outline-offset-1 outline-[#77770a]">
                <CieChart />
              </div>
              <ReadingsTable />
            </div>
          </main>
          <BottomBar />
        </div>
      </div>
      <Taskbar />
    </div>
  );
}
